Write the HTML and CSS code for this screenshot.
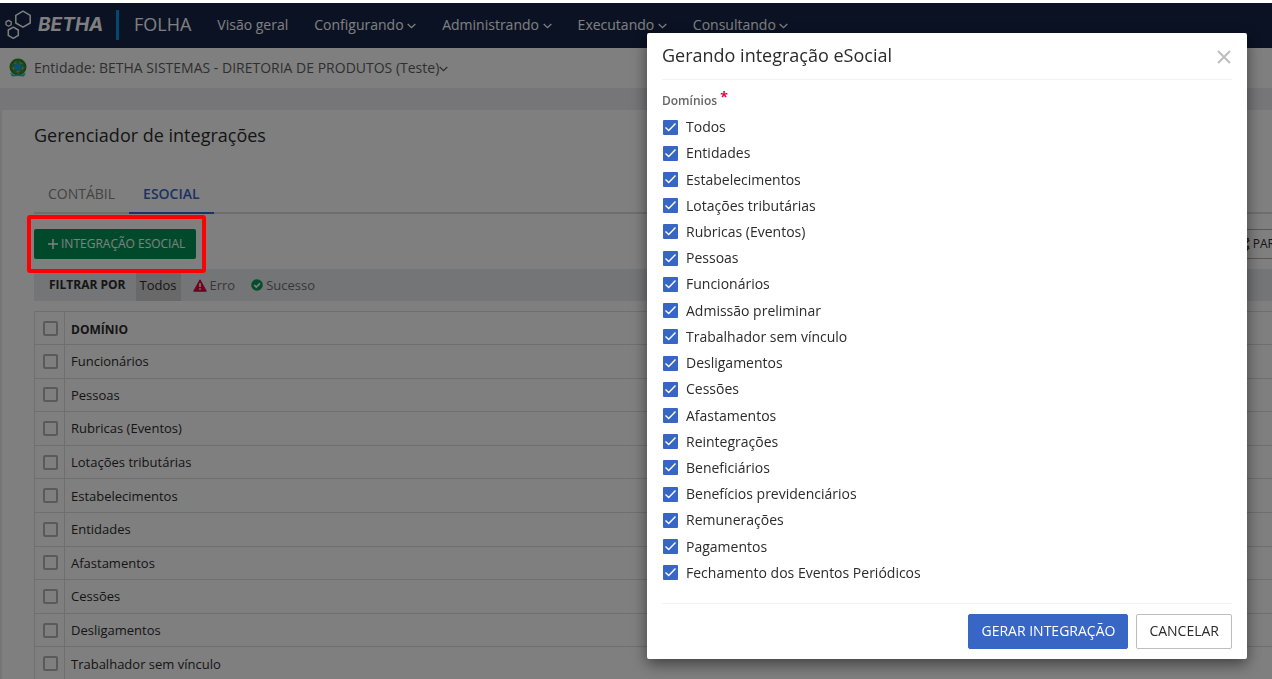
FILE: index.html
```html
<!DOCTYPE html>
<html lang="pt-BR">
<head>
<meta charset="utf-8">
<title>Gerenciador de integrações</title>
<link rel="stylesheet" href="styles.css">
</head>
<body>
<svg class="defs" aria-hidden="true">
  <symbol id="chevron" viewBox="0 0 9 6"><path d="M.7 1 4.5 4.7 8.3 1" fill="none" stroke="currentColor" stroke-width="1.3"/></symbol>
</svg>
<div class="page">
  <header class="navbar">
    <a class="brand" href="#">
      <svg class="brand-mark" viewBox="0 0 28 30" aria-hidden="true">
        <g fill="none" stroke="currentColor" stroke-width="1.5" stroke-linejoin="round">
          <path d="M18 1.2 25.2 5.3V13L18 17.2 10.8 13V5.3Z"/>
          <path d="M8.3 17.2 13.3 20V25.4L8.3 28.3 3.3 25.4V20Z"/>
          <path d="M3.6 10.4 6.2 11.9V14.8L3.6 16.2 1 14.8V11.9Z" stroke-width="1.3"/>
        </g>
      </svg>
      <span class="brand-name">BETHA</span>
    </a>
    <a class="product" href="#">FOLHA</a>
    <nav class="menu">
      <a href="#">Visão geral</a>
      <a href="#">Configurando <svg class="chev"><use href="#chevron"/></svg></a>
      <a href="#">Administrando <svg class="chev"><use href="#chevron"/></svg></a>
      <a href="#">Executando <svg class="chev"><use href="#chevron"/></svg></a>
      <a href="#">Consultando <svg class="chev"><use href="#chevron"/></svg></a>
    </nav>
  </header>
  <div class="entity">
    <svg class="crest" viewBox="0 0 18 20" aria-hidden="true">
      <circle cx="9" cy="9" r="7" fill="#c9a92c" stroke="#1d8b35" stroke-width="3"/>
      <circle cx="9" cy="9" r="6" fill="none" stroke="#d98a2c" stroke-width="1" stroke-dasharray="2 2"/>
      <path d="M9 2 10.8 6.3 15.4 6.7 12 9.9 13 14.5 9 12.1 5 14.5 6 9.9 2.6 6.7 7.2 6.3Z" fill="#2b9a3e" stroke="#2b9a3e" stroke-width="1"/>
      <circle cx="9" cy="9" r="4" fill="#1f9fd0"/>
      <path d="M1 14.5 5 16.8 9 16.2 13 16.8 17 14.5 15 18.6 9 18 3 18.6Z" fill="#31b5b0"/>
    </svg>
    <a href="#">Entidade: BETHA SISTEMAS - DIRETORIA DE PRODUTOS (Teste)<svg class="chev"><use href="#chevron"/></svg></a>
  </div>
  <main class="panel">
    <h1>Gerenciador de integrações</h1>
    <div class="tabs">
      <a href="#">CONTÁBIL</a>
      <a href="#" class="active">ESOCIAL</a>
    </div>
    <div class="toolbar">
      <div class="highlight">
        <button class="btn-add" type="button"><svg viewBox="0 0 10 10" aria-hidden="true"><path d="M5 0V10M0 5H10" stroke="currentColor" stroke-width="1.5"/></svg>INTEGRAÇÃO ESOCIAL</button>
      </div>
      <button class="btn-param" type="button"><svg viewBox="0 0 16 14" aria-hidden="true"><g fill="none" stroke="currentColor"><circle cx="5" cy="7" r="3.2" stroke-width="2.4"/><circle cx="5" cy="7" r="4.8" stroke-width="1.4" stroke-dasharray="2 1.8"/><circle cx="12.6" cy="3.2" r="1.6" stroke-width="1.5"/><circle cx="12.6" cy="3.2" r="2.6" stroke-dasharray="1.2 1.5"/><circle cx="12.6" cy="10.8" r="1.6" stroke-width="1.5"/><circle cx="12.6" cy="10.8" r="2.6" stroke-dasharray="1.2 1.5"/></g></svg>PARÂMETROS</button>
    </div>
    <div class="filters">
      <strong>FILTRAR POR</strong>
      <a href="#" class="active">Todos</a>
      <a href="#"><svg class="i-warn" viewBox="0 0 14 13" aria-hidden="true"><path d="M7 .8 13.3 12.2H.7Z" fill="#e6003d" stroke="#e6003d" stroke-linejoin="round"/><path d="M7 4.2V8M7 9.2V10.8" stroke="#fff" stroke-width="1.6"/></svg>Erro</a>
      <a href="#"><svg class="i-ok" viewBox="0 0 12 12" aria-hidden="true"><circle cx="6" cy="6" r="5.8" fill="#0b9a5b"/><path d="M3.2 6 5.3 8.1 9 4.4" fill="none" stroke="#fff" stroke-width="1.7"/></svg>Sucesso</a>
    </div>
    <table class="grid">
      <thead><tr><th><input type="checkbox" aria-label="Selecionar todos"></th><th>DOMÍNIO</th></tr></thead>
      <tbody>
        <tr><td><input type="checkbox" id="r1"></td><td><label for="r1">Funcionários</label></td></tr>
        <tr><td><input type="checkbox" id="r2"></td><td><label for="r2">Pessoas</label></td></tr>
        <tr><td><input type="checkbox" id="r3"></td><td><label for="r3">Rubricas (Eventos)</label></td></tr>
        <tr><td><input type="checkbox" id="r4"></td><td><label for="r4">Lotações tributárias</label></td></tr>
        <tr><td><input type="checkbox" id="r5"></td><td><label for="r5">Estabelecimentos</label></td></tr>
        <tr><td><input type="checkbox" id="r6"></td><td><label for="r6">Entidades</label></td></tr>
        <tr><td><input type="checkbox" id="r7"></td><td><label for="r7">Afastamentos</label></td></tr>
        <tr><td><input type="checkbox" id="r8"></td><td><label for="r8">Cessões</label></td></tr>
        <tr><td><input type="checkbox" id="r9"></td><td><label for="r9">Desligamentos</label></td></tr>
        <tr><td><input type="checkbox" id="r10"></td><td><label for="r10">Trabalhador sem vínculo</label></td></tr>
      </tbody>
    </table>
  </main>
</div>
<div class="backdrop">
  <section class="modal" role="dialog" aria-labelledby="modal-title">
    <header class="modal-head">
      <h2 id="modal-title">Gerando integração eSocial</h2>
      <button class="close" type="button" aria-label="Fechar"><svg viewBox="0 0 14 14"><path d="M1 1 13 13M13 1 1 13" stroke="currentColor" stroke-width="2"/></svg></button>
    </header>
    <fieldset class="domains">
      <legend>Domínios <span class="req">*</span></legend>
      <div class="options">
        <label><input type="checkbox" checked>Todos</label>
        <label><input type="checkbox" checked>Entidades</label>
        <label><input type="checkbox" checked>Estabelecimentos</label>
        <label><input type="checkbox" checked>Lotações tributárias</label>
        <label><input type="checkbox" checked>Rubricas (Eventos)</label>
        <label><input type="checkbox" checked>Pessoas</label>
        <label><input type="checkbox" checked>Funcionários</label>
        <label><input type="checkbox" checked>Admissão preliminar</label>
        <label><input type="checkbox" checked>Trabalhador sem vínculo</label>
        <label><input type="checkbox" checked>Desligamentos</label>
        <label><input type="checkbox" checked>Cessões</label>
        <label><input type="checkbox" checked>Afastamentos</label>
        <label><input type="checkbox" checked>Reintegrações</label>
        <label><input type="checkbox" checked>Beneficiários</label>
        <label><input type="checkbox" checked>Benefícios previdenciários</label>
        <label><input type="checkbox" checked>Remunerações</label>
        <label><input type="checkbox" checked>Pagamentos</label>
        <label><input type="checkbox" checked>Fechamento dos Eventos Periódicos</label>
      </div>
    </fieldset>
    <footer class="modal-foot">
      <button class="btn primary" type="button">GERAR INTEGRAÇÃO</button>
      <button class="btn" type="button">CANCELAR</button>
    </footer>
  </section>
</div>
</body>
</html>
```
FILE: styles.css
```css
* { box-sizing: border-box; }
body {
  margin: 0;
  height: 100vh;
  overflow: hidden;
  border-top: 3px solid #fff;
  background: #ecedf2;
  color: #2b2b2b;
  font: 14px/20px "Open Sans", "Noto Sans", sans-serif;
}
a { color: inherit; text-decoration: none; }
button { font: inherit; cursor: pointer; }
svg { flex: none; }
.defs { position: absolute; width: 0; height: 0; }
.page { min-width: 1375px; }
.chev { width: 9px; height: 6px; vertical-align: 1px; }

/* Navigation */
.navbar { display: flex; align-items: center; height: 45px; padding-bottom: 2px; background: #142448; color: #fff; }
.brand { display: flex; align-items: center; gap: 5px; padding-left: 5px; }
.brand-mark { width: 28px; height: 30px; }
.brand-name { width: 78px; font-family: Inter, "Open Sans", sans-serif; font-size: 19px; font-weight: 700; font-style: italic; line-height: 24px; }
.product { padding: 0 0 2px 15px; border-left: 3px solid #0095da; font-size: 18px; line-height: 28px; }
.menu { display: flex; gap: 26px; padding-left: 26px; }

/* Entity selector */
.entity { display: flex; align-items: center; gap: 7px; height: 40px; padding-left: 9px; background: #fff; color: #5e5e5e; }
.crest { width: 18px; height: 20px; }

/* Content */
.panel { margin: 22px 0 0 2px; padding: 13px 32px 0; background: #fff; }
h1 { margin: 0; font-size: 18px; font-weight: 400; line-height: 24px; }
.tabs { display: flex; margin-top: 27px; border-bottom: 2px solid #dcdcdc; color: #868686; }
.tabs a { margin-bottom: -2px; padding: 10px 14px 8px; border-bottom: 2px solid transparent; }
.tabs .active { border-color: #3866c4; color: #3866c4; font-weight: 600; }
.toolbar { display: flex; justify-content: space-between; margin-top: 15px; font-size: 12px; }
.highlight { position: relative; }
.highlight::after {
  content: "";
  position: absolute;
  z-index: 20;
  inset: -14px -10px -14px -7px;
  border: 4px solid #f00;
  border-radius: 3px;
  pointer-events: none;
}
.btn-add, .btn-param { display: flex; align-items: center; gap: 3px; height: 30px; border-radius: 2px; }
.btn-add { padding: 0 11px 0 14px; border: 0; background: #009556; color: #fff; }
.btn-add svg { width: 10px; height: 10px; }
.btn-param { padding: 0 12px; border: 1px solid #b0b0b0; background: #fff; color: #2b2b2b; }
.btn-param svg { width: 16px; height: 14px; }
.filters { display: flex; align-items: center; height: 32px; margin-top: 10px; padding-left: 15px; background: #e9ebef; color: #6e6e6e; font-size: 13px; }
.filters strong { margin-right: 10px; color: #2b2b2b; font-size: 12px; }
.filters a { display: flex; align-items: center; gap: 3px; margin-right: 16px; line-height: 32px; }
.filters .active { margin-right: 12px; padding: 0 4px; background: #d2d2d4; color: #2b2b2b; }
.i-warn { width: 14px; height: 13px; }
.i-ok { width: 12px; height: 12px; }
.grid { width: 100%; height: 370px; margin-top: 10px; border-collapse: collapse; font-size: 13px; text-align: left; }
.grid th, .grid td { height: 33px; padding: 0 6px; border: 1px solid #dedede; }
.grid th { font-size: 12px; }
.grid th:last-child { padding-top: 3px; }
.grid th:first-child, .grid td:first-child { width: 30px; padding: 0 0 0 8px; }

/* Check boxes */
input[type="checkbox"] {
  appearance: none;
  display: block;
  flex: none;
  width: 15px;
  height: 15px;
  margin: 0;
  border: 2px solid #b4b4b4;
  border-radius: 2px;
}
input[type="checkbox"]:checked {
  border: 0;
  border-radius: 1px;
  background: #3866c4 url("data:image/svg+xml,%3Csvg xmlns='http://www.w3.org/2000/svg' viewBox='0 0 15 15'%3E%3Cpath d='M2.5 7.5 5.7 10.5 12.5 3.5' fill='none' stroke='white' stroke-width='1.4'/%3E%3C/svg%3E");
}

/* Dialog */
.backdrop {
  position: fixed;
  z-index: 10;
  inset: 3px 0 0;
  display: flex;
  justify-content: flex-end;
  align-items: flex-start;
  padding: 30px 25px 20px;
  background: rgba(0, 0, 0, .5);
}
.modal {
  width: 600px;
  max-width: 100%;
  padding: 0 15px;
  border-radius: 2px;
  background: #fff;
  box-shadow: 0 5px 15px rgba(0, 0, 0, .5);
}
.modal-head { display: flex; justify-content: space-between; align-items: center; height: 47px; border-bottom: 1px solid #f2f2f2; }
.modal-head h2 { margin: 0; padding-bottom: 2px; font-size: 18px; font-weight: 400; line-height: 24px; }
.close { padding: 2px 1px 1px; border: 0; background: none; color: #bdbdbd; }
.close svg { display: block; width: 14px; height: 14px; }
.domains { margin: 0; padding: 0; border: 0; }
.domains legend { padding: 10px 0 3px; color: #666; font-size: 12px; font-weight: 600; }
.req { color: #e6003d; font-size: 14px; font-weight: 700; vertical-align: 3px; line-height: 14px; }
.options { display: grid; grid-auto-rows: 1fr; min-height: 472px; }
.options label { display: flex; align-items: center; gap: 8px; padding-left: 1px; }
.modal-foot { display: flex; justify-content: flex-end; gap: 8px; margin-top: 17px; padding: 10px 0; border-top: 1px solid #f2f2f2; }
.btn { height: 35px; padding: 0 12px 2px; border: 1px solid #bdbdbd; border-radius: 2px; background: #fff; color: #2b2b2b; }
.primary { border-color: #3866c4; background: #3866c4; color: #fff; }
```
